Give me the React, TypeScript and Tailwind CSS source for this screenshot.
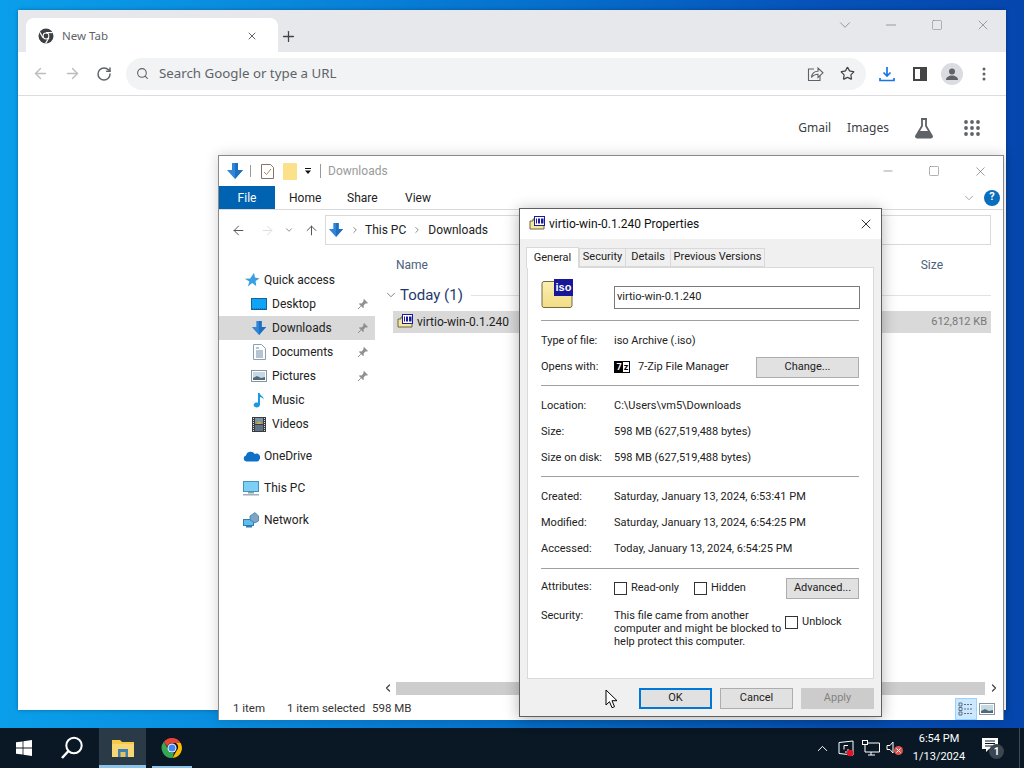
import React from "react";
import { ArrowLeft, ArrowRight, RotateCw, Search, Star, Plus, X, Minus, Square, ChevronDown, ChevronRight, ChevronLeft, ChevronUp, ArrowUp } from "lucide-react";

const font = { fontFamily: 'Roboto,"Liberation Sans",sans-serif' };
const noto = { fontFamily: '"Noto Sans",sans-serif' };

function ChromeMono() {
  return (
    <svg width="16" height="16" viewBox="0 0 16 16">
      <circle cx="8" cy="8" r="7.5" fill="#3c4043" />
      <circle cx="8" cy="8" r="3.4" fill="#fff" />
      <circle cx="8" cy="8" r="2.4" fill="#3c4043" />
      <path d="M8 4.6h6.6" stroke="#fff" strokeWidth="1.2" />
      <path d="M5 9.8L1.8 4.2" stroke="#fff" strokeWidth="1.2" />
      <path d="M10.9 9.7L7.6 15.4" stroke="#fff" strokeWidth="1.2" />
    </svg>
  );
}

function ChromeLogo() {
  return (
    <svg width="24" height="24" viewBox="0 0 48 48">
      <path d="M24 4a20 20 0 0 1 17.3 10H24a10 10 0 0 0-9.5 7L7.7 11.6A20 20 0 0 1 24 4z" fill="#ea4335" />
      <path d="M41.3 14A20 20 0 0 1 25 44l8.6-15A10 10 0 0 0 32 14z" fill="#fbbc04" />
      <path d="M7.7 11.6L16.3 26.4A10 10 0 0 0 28 33.3L25 44A20 20 0 0 1 7.7 11.6z" fill="#34a853" />
      <circle cx="24" cy="24" r="9" fill="#fff" />
      <circle cx="24" cy="24" r="7" fill="#4285f4" />
    </svg>
  );
}

function DownArrow({ size = 18 }: { size?: number }) {
  return (
    <svg width={size} height={size} viewBox="0 0 18 18">
      <path d="M6 1h6v7h5l-8 9-8-9h5z" fill="#2f86d8" />
      <path d="M9 1h3v7h5l-8 9z" fill="#1f6fc0" />
    </svg>
  );
}

function IsoSmall({ size = 16 }: { size?: number }) {
  return (
    <svg width={size} height={size} viewBox="0 0 16 16">
      <path d="M1 5h3v-2h11v10H1z" fill="#f6e7a0" stroke="#6b6440" strokeWidth="1" />
      <rect x="5.5" y="0.5" width="10" height="9" fill="#fff" stroke="#1a1a9c" strokeWidth="1" />
      <rect x="7" y="2.5" width="1" height="5" fill="#1a1a9c" />
      <rect x="9" y="2.5" width="2" height="5" fill="#1a1a9c" />
      <rect x="12" y="2.5" width="2.5" height="5" fill="#1a1a9c" />
    </svg>
  );
}

function IsoBig() {
  return (
    <div className="relative w-[32px] h-[29px] shrink-0">
      <svg width="32" height="29" viewBox="0 0 32 29" className="absolute left-0 top-0">
        <defs>
          <linearGradient id="isog" x1="0" y1="0" x2="0" y2="1">
            <stop offset="0" stopColor="#fbf0b0" />
            <stop offset="1" stopColor="#f2dc84" />
          </linearGradient>
        </defs>
        <path d="M1 4.5q0-2 2-2h14v8h14v16q0 2-2 2H3q-2 0-2-2z" fill="url(#isog)" stroke="#6f6a45" />
      </svg>
      <div className="absolute left-[13px] top-0 w-[19px] h-[17px] bg-[#17179a] flex items-center justify-center">
        <span className="text-[11px] leading-none font-bold text-white" style={{ fontFamily: '"Liberation Sans",sans-serif' }}>iso</span>
      </div>
    </div>
  );
}

function Pin() {
  return (
    <svg width="12" height="12" viewBox="0 0 12 12">
      <path d="M7 1l4 4-1 .6-1.6 0L6.6 7.4 6.8 9.4 6 10 2 6l.6-.8 2 .2 1.8-1.8 0-1.6z" fill="#8f8f8f" />
      <path d="M3.8 8.2L1 11" stroke="#8f8f8f" strokeWidth="1" />
    </svg>
  );
}

function NavIcon({ kind }: { kind: string }) {
  switch (kind) {
    case "star":
      return (
        <svg width="16" height="16" viewBox="0 0 16 16">
          <path d="M10 .8l1 4.6 4.5 1-3.9 2.7.6 5-4-3-4.4 3.4 1.6-5L.8 6.8l5.4-.4z" fill="#3a9fe0" />
        </svg>
      );
    case "desktop":
      return (
        <svg width="16" height="12" viewBox="0 0 16 12">
          <rect x="0.5" y="0.5" width="15" height="11" fill="#11a3f5" stroke="#14639f" />
          <path d="M1 11h14" stroke="#0f4c7c" strokeDasharray="1 1" />
        </svg>
      );
    case "down":
      return <DownArrow size={16} />;
    case "doc":
      return (
        <svg width="13" height="16" viewBox="0 0 13 16">
          <path d="M.5.5h8l4 4v11H.5z" fill="#fff" stroke="#8aa0b3" />
          <path d="M3 4h3M3 7h7M3 9h7M3 11h7M3 13h7" stroke="#6f8aa3" />
        </svg>
      );
    case "pic":
      return (
        <svg width="16" height="12" viewBox="0 0 16 12">
          <rect x="0.5" y="0.5" width="15" height="11" fill="#fff" stroke="#8a949c" />
          <rect x="2" y="2" width="12" height="8" fill="#c6d8e4" />
          <path d="M2 8l4-2 4 2 4-1v3H2z" fill="#4f6b78" />
        </svg>
      );
    case "music":
      return (
        <svg width="12" height="16" viewBox="0 0 12 16">
          <path d="M5 1h1.600c.4 2.600 4.400 3.400 4 6.600-.8-1.600-2.200-2.400-3.600-2.600v7.400c0 1.800-1.600 3-3.400 3C2 15.400.6 14.400.6 13c0-1.500 1.600-2.600 3-2.600.6 0 1 .1 1.400.3z" fill="#1c9ae0" />
        </svg>
      );
    case "video":
      return (
        <svg width="14" height="15" viewBox="0 0 14 15">
          <rect width="14" height="15" fill="#3b3b3b" />
          <rect x="3" y="1" width="8" height="6" fill="#7a94a8" />
          <rect x="3" y="8" width="8" height="6" fill="#5d7488" />
          <path d="M4 7l3-3 3 3" fill="#d6a63a" />
          <path d="M1 1h1v1H1zM1 3h1v1H1zM1 5h1v1H1zM1 7h1v1H1zM1 9h1v1H1zM1 11h1v1H1zM1 13h1v1H1zM12 1h1v1h-1zM12 3h1v1h-1zM12 5h1v1h-1zM12 7h1v1h-1zM12 9h1v1h-1zM12 11h1v1h-1zM12 13h1v1h-1z" fill="#ddd" />
        </svg>
      );
    case "cloud":
      return (
        <svg width="17" height="12" viewBox="0 0 17 12">
          <path d="M3.500 11.500A3 3 0 0 1 3 5.600 4.700 4.700 0 0 1 11.700 4a3.700 3.700 0 0 1 4.900 5.200q-.7 2.300-2.600 2.300z" fill="#0e70c6" />
        </svg>
      );
    case "pc":
      return (
        <svg width="16" height="15" viewBox="0 0 16 15">
          <rect x="0.500" y="0.500" width="15" height="10" fill="#7cd0f5" stroke="#4a93b8" />
          <rect x="5" y="11" width="6" height="1.500" fill="#8aa4b4" />
          <rect x="0" y="13" width="16" height="1.500" fill="#9db0bb" />
        </svg>
      );
    default:
      return (
        <svg width="16" height="16" viewBox="0 0 16 16">
          <rect x="0.500" y="7.500" width="10" height="6" fill="#5fbcec" stroke="#2e7fb0" />
          <rect x="3" y="14" width="6" height="1.500" fill="#2e7fb0" />
          <path d="M7 4l5-3.500 3.500 3.500v5L12 11 7 8z" fill="#7aa6c9" stroke="#3f6f96" strokeWidth="0.700" />
        </svg>
      );
  }
}

const Hr = () => <div className="h-px bg-[#a0a0a0] ml-[13px] mr-[14px]" />;

function PRow({ label, value }: { label: string; value: React.ReactNode }) {
  return (
    <div className="flex items-center h-[26px]">
      <span className="w-[73px] shrink-0">{label}</span>
      <span>{value}</span>
    </div>
  );
}

function WinBtn({ children, className = "bg-[#e1e1e1] border border-[#adadad]" }: { children: React.ReactNode; className?: string }) {
  return <div className={`h-[21px] flex items-center justify-center ${className}`}>{children}</div>;
}

const Box = () => <span className="w-[13px] h-[13px] border border-[#333] bg-white inline-block shrink-0" />;

function Properties() {
  return (
    <div className="absolute left-[519px] top-[198px] w-[363px] h-[509px] bg-[#f0f0f0] border border-[#5f5f5f] shadow-[0_2px_14px_rgba(0,0,0,0.3)] flex flex-col text-[11px] text-[#222]">
      <div className="h-[30px] bg-white flex items-center pl-[9px] pr-[7px] shrink-0">
        <IsoSmall />
        <span className="ml-[4px] text-[12px] text-[#111]">virtio-win-0.1.240 Properties</span>
        <X size={16} strokeWidth={1.2} className="ml-auto text-black" />
      </div>
      <div className="flex items-end h-[28px] pl-[6px] shrink-0 whitespace-nowrap">
        <div className="w-[53px] h-[21px] bg-white border border-b-0 border-[#d9d9d9] flex items-center justify-center relative top-[1px] z-10">General</div>
        <div className="w-[47px] h-[19px] border border-[#d9d9d9] flex items-center justify-center">Security</div>
        <div className="w-[45px] h-[19px] border border-l-0 border-[#d9d9d9] flex items-center justify-center">Details</div>
        <div className="w-[94px] h-[19px] border border-l-0 border-[#d9d9d9] flex items-center justify-center">Previous Versions</div>
      </div>
      <div className="mx-[7px] w-[347px] h-[412px] bg-white border border-[#d9d9d9] flex flex-col shrink-0">
        <div className="flex items-start pl-[13px] pt-[11px] h-[52px]">
          <IsoBig />
          <div className="ml-[41px] mt-[7px] w-[246px] h-[23px] border border-[#7a7a7a] flex items-center pl-[2px] text-[#222]">virtio-win-0.1.240</div>
        </div>
        <Hr />
        <div className="pl-[13px] pt-[7px] pr-[14px] h-[64px]">
          <PRow label="Type of file:" value="iso Archive (.iso)" />
          <div className="flex items-center h-[26px]">
            <span className="w-[73px] shrink-0">Opens with:</span>
            <span className="w-[16px] h-[12px] flex border border-black mr-[8px] bg-white text-[9px] font-bold leading-[10px]">
              <span className="w-[8px] bg-black text-white text-center">7</span>
              <span className="w-[6px] text-black text-center">z</span>
            </span>
            <span>7-Zip File Manager</span>
            <WinBtn className="ml-auto w-[103px] bg-[#e1e1e1] border border-[#adadad]">Change...</WinBtn>
          </div>
        </div>
        <Hr />
        <div className="pl-[13px] pt-[7px] h-[90px]">
          <PRow label="Location:" value="C:\Users\vm5\Downloads" />
          <PRow label="Size:" value="598 MB (627,519,488 bytes)" />
          <PRow label="Size on disk:" value="598 MB (627,519,488 bytes)" />
        </div>
        <Hr />
        <div className="pl-[13px] pt-[7px] h-[91px]">
          <PRow label="Created:" value="Saturday, January 13, 2024, 6:53:41 PM" />
          <PRow label="Modified:" value="Saturday, January 13, 2024, 6:54:25 PM" />
          <PRow label="Accessed:" value="Today, January 13, 2024, 6:54:25 PM" />
        </div>
        <Hr />
        <div className="pl-[13px] pr-[14px] pt-[9px] flex items-start h-[31px]">
          <span className="w-[73px] shrink-0 leading-[18px]">Attributes:</span>
          <span className="mt-[4px]"><Box /></span>
          <span className="ml-[4px] w-[63px] mt-[2px] leading-[16px]">Read-only</span>
          <span className="mt-[4px]"><Box /></span>
          <span className="ml-[4px] mt-[2px] leading-[16px]">Hidden</span>
          <WinBtn className="ml-auto w-[73px] bg-[#e1e1e1] border border-[#adadad]">Advanced...</WinBtn>
        </div>
        <div className="pl-[13px] pt-[9px] flex items-start">
          <span className="w-[73px] shrink-0 leading-[13px]">Security:</span>
          <span className="w-[168px] leading-[13px] shrink-0">This file came from another computer and might be blocked to help protect this computer.</span>
          <span className="ml-[3px] mt-[5px] flex items-center"><Box /><span className="ml-[4px]">Unblock</span></span>
        </div>
      </div>
      <div className="flex items-center justify-end gap-[8px] pr-[7px] h-[37px] pt-[2px]">
        <WinBtn className="w-[73px] bg-[#e1e1e1] border-2 border-[#0078d7]">OK</WinBtn>
        <WinBtn className="w-[73px] bg-[#e1e1e1] border border-[#adadad]">Cancel</WinBtn>
        <WinBtn className="w-[73px] bg-[#cccccc] border border-[#cccccc] text-[#838383]">Apply</WinBtn>
      </div>
    </div>
  );
}

function Explorer() {
  const nav: [string, string, number, boolean, boolean?][] = [
    ["star", "Quick access", 0, false],
    ["desktop", "Desktop", 1, true],
    ["down", "Downloads", 1, true, true],
    ["doc", "Documents", 1, true],
    ["pic", "Pictures", 1, true],
    ["music", "Music", 1, false],
    ["video", "Videos", 1, false],
  ];
  return (
    <div className="absolute left-[218px] top-[145px] w-[786px] h-[565px] bg-white border border-[#8a8a8a] border-b-0 shadow-[0_0_12px_rgba(0,0,0,0.18)] flex flex-col text-[12px] text-[#222]">
      <div className="h-[30px] flex items-center pl-[7px] shrink-0">
        <DownArrow />
        <span className="w-px h-[12px] bg-[#999] ml-[6px]" />
        <svg width="13" height="16" viewBox="0 0 13 16" className="ml-[10px]">
          <path d="M.5 1.500h9l3 3v11H.5z" fill="#fff" stroke="#857268" />
          <path d="M3 9l2.500 2.500L10 6" stroke="#b5835a" fill="none" />
        </svg>
        <svg width="14" height="17" viewBox="0 0 14 17" className="ml-[9px]"><rect width="14" height="17" rx="1" fill="#fbe28a" /></svg>
        <svg width="8" height="8" viewBox="0 0 8 8" className="ml-[7px]"><path d="M1 1h6v1H1zM1 3.500h6L4 7z" fill="#111" /></svg>
        <span className="w-px h-[14px] bg-[#999] ml-[8px]" />
        <span className="ml-[7px] text-[#9a9a9a]">Downloads</span>
        <div className="ml-auto flex items-center text-[#666]">
          <span className="w-[46px] flex justify-center"><Minus size={14} strokeWidth={1} /></span>
          <span className="w-[46px] flex justify-center"><Square size={12} strokeWidth={1} /></span>
          <span className="w-[46px] flex justify-center"><X size={15} strokeWidth={1} /></span>
        </div>
      </div>
      <div className="h-[24px] flex border-b border-[#dadada] shrink-0 items-center">
        <div className="w-[56px] h-[23px] bg-[#0063b1] text-white flex items-center justify-center">File</div>
        <span className="ml-[14px] w-[30px]">Home</span>
        <span className="ml-[28px] w-[30px]">Share</span>
        <span className="ml-[28px]">View</span>
        <ChevronDown size={14} strokeWidth={1.5} className="ml-auto text-[#999]" />
        <span className="ml-[8px] mr-[3px] w-[16px] h-[16px] rounded-full bg-[#0a6ebd] text-white text-[11px] font-bold flex items-center justify-center">?</span>
      </div>
      <div className="h-[40px] flex items-center pl-[12px] pr-[12px] shrink-0">
        <ArrowLeft size={15} className="text-[#555]" strokeWidth={1.6} />
        <ArrowRight size={15} className="ml-[14px] text-[#ddd]" strokeWidth={1.6} />
        <ChevronDown size={10} className="ml-[9px] text-[#777]" strokeWidth={2} />
        <ArrowUp size={15} className="ml-[10px] text-[#555]" strokeWidth={1.6} />
        <div className="ml-[6px] flex-1 h-[30px] border border-[#d9d9d9] flex items-center pl-[2px]">
          <DownArrow size={16} />
          <ChevronRight size={10} className="ml-[6px] text-[#777]" strokeWidth={2} />
          <span className="ml-[5px]">This PC</span>
          <ChevronRight size={10} className="ml-[6px] text-[#777]" strokeWidth={2} />
          <span className="ml-[6px]">Downloads</span>
        </div>
      </div>
      <div className="flex-1 flex min-h-0">
        <div className="w-[156px] pt-[18px] shrink-0">
          {nav.map(([k, t, ind, pin, sel]) => (
            <div key={t} className={`h-[24px] flex items-center pr-[4px] ${sel ? "bg-[#d9d9d9]" : ""}`}>
              <span className={ind ? "flex items-center justify-center w-[18px] ml-[31px]" : "flex items-center justify-center w-[18px] ml-[24px]"}><NavIcon kind={k} /></span>
              <span className={ind ? "ml-[4px]" : "ml-[3px]"}>{t}</span>
              {pin && <span className="ml-auto mr-[2px]"><Pin /></span>}
            </div>
          ))}
          <div className="mt-[8px] flex flex-col gap-[8px]">
            {[["cloud", "OneDrive"], ["pc", "This PC"], ["net", "Network"]].map(([k, t]) => (
              <div key={t} className="h-[24px] flex items-center">
                <span className="w-[18px] ml-[23px] flex justify-center"><NavIcon kind={k} /></span>
                <span className="ml-[4px]">{t}</span>
              </div>
            ))}
          </div>
        </div>
        <div className="flex-1 flex flex-col min-w-0 relative">
          <div className="h-[29px] flex items-center pl-[21px] pt-[1px] text-[#4c607a] shrink-0">
            <span>Name</span>
            <span className="ml-auto mr-[60px]">Size</span>
          </div>
          <div className="h-[32px] flex items-center pl-[9px] shrink-0">
            <ChevronDown size={14} strokeWidth={1.2} className="text-[#555]" />
            <span className="ml-[2px] text-[15px] text-[#1e3a6e]">Today (1)</span>
            <span className="ml-[8px] flex-1 h-px bg-[#e3e3e3] mr-[12px]" />
          </div>
          <div className="h-[22px] ml-[18px] mr-[12px] bg-[#d9d9d9] flex items-center pl-[4px] pr-[4px] shrink-0">
            <IsoSmall />
            <span className="ml-[4px]">virtio-win-0.1.240</span>
            <span className="ml-auto text-[#777] text-[11px]">612,812 KB</span>
          </div>
          <div className="flex-1" />
          <div className="h-[16px] flex items-center pl-[7px] pr-[3px] shrink-0">
            <ChevronLeft size={12} strokeWidth={2.5} className="text-[#444]" />
            <div className="ml-[2px] flex-1 h-[13px] bg-[#cdcdcd]" />
            <ChevronRight size={12} strokeWidth={2.5} className="ml-[3px] text-[#444]" />
          </div>
        </div>
      </div>
      <div className="h-[24px] flex items-center pl-[14px] pr-[8px] pt-[1px] shrink-0 text-[#333] text-[11.5px]">
        <span className="w-[54px]">1 item</span>
        <span className="w-[85px]">1 item selected</span>
        <span>598 MB</span>
        <div className="ml-auto flex items-center">
          <span className="w-[22px] h-[22px] bg-[#cce8ff] border border-[#99d1ff] flex items-center justify-center">
            <svg width="16" height="14" viewBox="0 0 16 14"><path d="M1 1h3v3H1zM1 5.500h3v3H1zM1 10h3v3H1z" fill="none" stroke="#5a7084" /><path d="M6 2.500h9M6 7h9M6 11.500h9" stroke="#5a7084" strokeDasharray="2 1" /></svg>
          </span>
          <span className="ml-[2px]"><NavIcon kind="pic" /></span>
        </div>
      </div>
    </div>
  );
}

function ChromeWin() {
  return (
    <div className="absolute left-[18px] top-0 w-[988px] h-[700px] bg-white shadow-[0_0_4px_rgba(0,0,0,0.3)] flex flex-col">
      <div className="h-[42px] bg-[#e6e8eb] flex items-end pl-[8px] shrink-0">
        <div className="w-[252px] h-[34px] bg-white rounded-t-[8px] flex items-center pl-[12px] pr-[20px] pt-[2px]">
          <ChromeMono />
          <span className="ml-[8px] text-[11.5px] text-[#5f6368]" style={noto}>New Tab</span>
          <X size={12} strokeWidth={2} className="ml-auto text-[#5f6368]" />
        </div>
        <Plus size={17} strokeWidth={1.8} className="ml-[2px] mb-[7px] text-[#444]" />
        <div className="ml-auto self-start flex items-center h-[30px] text-[#777]">
          <span className="w-[46px] flex justify-center"><ChevronDown size={18} strokeWidth={1} /></span>
          <span className="w-[46px] flex justify-center"><Minus size={16} strokeWidth={1} /></span>
          <span className="w-[46px] flex justify-center"><Square size={12} strokeWidth={1} /></span>
          <span className="w-[46px] flex justify-center"><X size={16} strokeWidth={1} /></span>
        </div>
      </div>
      <div className="h-[44px] bg-white border-b border-[#dadce0] flex items-center pl-[14px] pr-[16px] shrink-0">
        <ArrowLeft size={17} strokeWidth={2} className="text-[#bdbdbd]" />
        <ArrowRight size={17} strokeWidth={2} className="ml-[15px] text-[#bdbdbd]" />
        <RotateCw size={16} strokeWidth={2.2} className="ml-[15px] text-[#5f6368]" />
        <div className="ml-[14px] w-[740px] h-[32px] rounded-full bg-[#f1f3f4] flex items-center pl-[10px] pr-[11px]">
          <Search size={13} strokeWidth={2} className="text-[#5f6368]" />
          <span className="ml-[10px] text-[13.3px] text-[#5f6368]" style={noto}>Search Google or type a URL</span>
          <svg width="17" height="16" viewBox="0 0 17 16" className="ml-auto">
            <path d="M7 3H1.500v11.500H13V9.500" fill="none" stroke="#5f6368" strokeWidth="1.100" />
            <path d="M4.500 11.500c.4-4 3-6.200 6.500-6.200V2l5 4.800-5 4.700V8.200c-3 0-5 1-6.500 3.300z" fill="none" stroke="#5f6368" strokeWidth="1.100" />
          </svg>
          <Star size={15} strokeWidth={2} className="ml-[16px] text-[#444]" />
        </div>
        <svg width="16" height="16" viewBox="0 0 16 16" className="ml-[13px]"><path d="M8 1v9M4.500 6.500L8 10l3.500-3.500M1 12v2.500h14V12" stroke="#1a73e8" strokeWidth="1.700" fill="none" /></svg>
        <span className="ml-[18px] w-[14px] h-[14px] border-[2px] border-[#444] border-r-[7px] box-border" />
        <span className="ml-[14px] w-[22px] h-[22px] rounded-full bg-[#dadce0] flex items-center justify-center">
          <svg width="14" height="14" viewBox="0 0 14 14"><circle cx="7" cy="4.500" r="3" fill="#5f6368" /><path d="M1 13c0-3 3-4.500 6-4.500s6 1.500 6 4.500z" fill="#5f6368" /></svg>
        </span>
        <svg width="4" height="14" viewBox="0 0 4 14" className="ml-[19px]"><circle cx="2" cy="2" r="1.500" fill="#5f6368" /><circle cx="2" cy="7" r="1.500" fill="#5f6368" /><circle cx="2" cy="12" r="1.500" fill="#5f6368" /></svg>
      </div>
      <div className="flex justify-end items-center h-[62px] pt-[1px] pr-[26px] text-[12px] text-[#3c4043]" style={noto}>
        <span>Gmail</span>
        <span className="ml-[16px]">Images</span>
        <svg width="22" height="22" viewBox="0 0 22 22" className="ml-[24px]"><path d="M8 2h6M9 2v7L3 19q-.4 1.500 1 1.500h14q1.400 0 1-1.500L13 9V2" fill="none" stroke="#5f6368" strokeWidth="1.800" /><path d="M6 14h10l3 6H3z" fill="#5f6368" /></svg>
        <svg width="16" height="16" viewBox="0 0 16 16" className="ml-[29px]">
          {[2, 8, 14].flatMap((y) => [2, 8, 14].map((x) => <circle key={`${x}${y}`} cx={x} cy={y} r="1.900" fill="#5f6368" />))}
        </svg>
      </div>
    </div>
  );
}

function Taskbar() {
  return (
    <div className="h-[40px] bg-[#0a1826] flex items-center text-white shrink-0">
      <svg width="16" height="16" viewBox="0 0 16 16" className="ml-[16px]">
        <path d="M0 2.300l6.600-.9v6.200H0zM7.400 1.300L16 0v7.600H7.400zM0 8.400h6.600v6.200L0 13.700zM7.400 8.400H16V16l-8.600-1.300z" fill="#fff" />
      </svg>
      <svg width="24" height="24" viewBox="0 0 24 24" className="ml-[28px]">
        <circle cx="14" cy="9.500" r="7.700" fill="none" stroke="#fff" strokeWidth="2" />
        <path d="M8.500 15L2 22" stroke="#fff" strokeWidth="2.500" />
      </svg>
      <div className="ml-[15px] w-[47px] h-[40px] bg-[#2b3a47] relative flex items-center justify-center">
        <svg width="22" height="18" viewBox="0 0 22 18">
          <path d="M0 1h8l2 2h12v4H0z" fill="#f7c948" />
          <rect y="5" width="22" height="13" fill="#f7d774" />
          <rect x="6" y="10" width="10" height="8" fill="#3f7fb8" />
          <rect x="8.500" y="13" width="5" height="5" fill="#e8c35a" />
        </svg>
        <span className="absolute left-0 right-0 bottom-0 h-[3px] bg-[#8cc3ea]" />
      </div>
      <div className="ml-[6px] w-[40px] h-[40px] relative flex items-center justify-center">
        <ChromeLogo />
        <span className="absolute left-0 right-0 bottom-0 h-[2px] bg-[#8cc3ea]" />
      </div>
      <div className="ml-auto flex items-center">
        <ChevronUp size={17} strokeWidth={1.400} />
        <svg width="18" height="18" viewBox="0 0 18 18" className="ml-[6px]">
          <path d="M16 2L2 3.500v11L16 16z" fill="none" stroke="#fff" />
          <path d="M11 6.500H7v4M8 13h3v-3" stroke="#fff" fill="none" />
          <circle cx="13" cy="14" r="3.200" fill="#e81123" />
        </svg>
        <svg width="18" height="16" viewBox="0 0 18 16" className="ml-[7px]">
          <rect x="0.500" y="0.500" width="5" height="4" fill="none" stroke="#fff" />
          <path d="M5 3h12.500v9H3V5M9 12v3M6 15h7" fill="none" stroke="#fff" />
        </svg>
        <svg width="18" height="16" viewBox="0 0 18 16" className="ml-[6px]">
          <path d="M1 5.500h3L7 2v11L4 9.500H1z" fill="none" stroke="#fff" />
          <circle cx="12.500" cy="10.500" r="4.500" fill="#d9534f" />
          <path d="M10.500 8.500l4 4M14.500 8.500l-4 4" stroke="#fff" />
        </svg>
        <div className="ml-[7px] w-[56px] flex flex-col items-center text-[11px] leading-[18px]">
          <span>6:54 PM</span>
          <span>1/13/2024</span>
        </div>
        <div className="ml-[15px] relative w-[20px] h-[20px]">
          <svg width="16" height="15" viewBox="0 0 16 15" className="absolute left-0 top-0">
            <path d="M0 0h16v11H7l-3 3v-3H0z" fill="#fff" />
            <path d="M3 3h10M3 5.500h10M3 8h7" stroke="#0a1826" />
          </svg>
          <span className="absolute left-[7px] top-[6px] w-[15px] h-[15px] rounded-full bg-[#3a4651] text-[10px] font-bold flex items-center justify-center">1</span>
        </div>
        <span className="ml-[17px] mr-[4px] w-px h-[40px] bg-[#3d4a57]" />
      </div>
    </div>
  );
}

export default function App() {
  return (
    <div className="w-[1024px] h-[768px] flex flex-col overflow-hidden" style={font}>
      <div className="flex-1 relative pt-[10px] bg-[linear-gradient(90deg,#0a9fea_0%,#0a8fe0_20%,#0673cf_50%,#0652b8_80%,#0546ad_100%)]">
        <div className="relative h-full">
          <ChromeWin />
          <Explorer />
          <Properties />
          <svg width="14" height="20" viewBox="0 0 14 20" className="absolute left-[605px] top-[679px]">
            <path d="M1 1v15l3.500-3.300 2.500 6 2.500-1-2.500-6H12z" fill="#fff" stroke="#000" />
          </svg>
        </div>
      </div>
      <Taskbar />
    </div>
  );
}
